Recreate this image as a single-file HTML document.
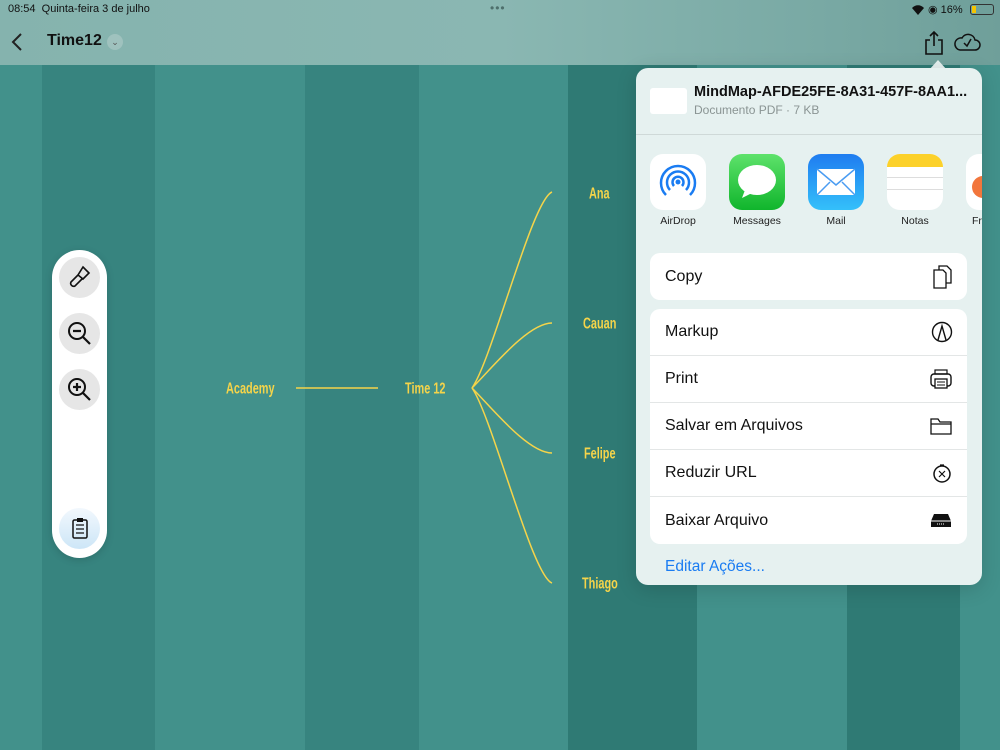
<!DOCTYPE html>
<html><head><meta charset="utf-8"><style>
*{margin:0;padding:0;box-sizing:border-box}
body{width:1000px;height:750px;overflow:hidden;position:relative;font-family:"Liberation Sans",sans-serif;background:#42918b}
.st{position:absolute;top:0;height:750px}
.top{position:absolute;left:0;top:0;width:1000px;height:65px;background:linear-gradient(90deg,#85b3ae 0%,#8ab7b2 50%,#7aaaa5 80%,#6f9f9a 100%)}
.lbl{position:absolute;color:#f5d44a;font-family:"Liberation Sans Narrow","Liberation Sans",sans-serif;font-weight:bold;font-size:14px;transform:scale(0.78,1.1);transform-origin:left center;white-space:nowrap}
.panel{position:absolute;left:636px;top:68px;width:346px;height:517px;background:#e6f1f0;border-radius:12px;box-shadow:0 4px 20px rgba(0,0,0,.15);overflow:hidden}
.grp{position:absolute;left:14px;width:317px;background:#fff;border-radius:10px}
.row{height:47px;border-bottom:1px solid #e3e6e6;display:flex;align-items:center;justify-content:space-between;padding:0 14px 0 15px;font-size:16px;color:#111}
.row:last-child{border-bottom:none}
.app{position:absolute;top:86px;width:56px;height:56px;border-radius:13px}
.an{position:absolute;top:147px;font-size:10.5px;color:#222;width:80px;text-align:center}
.tb{position:absolute;left:52px;top:250px;width:55px;height:308px;background:#fff;border-radius:28px;box-shadow:0 2px 8px rgba(0,0,0,.15)}
.tbb{position:absolute;left:7px;width:41px;height:41px;border-radius:50%;background:#e6e6e6}
</style></head><body>
<div class="st" style="left:42px;width:113px;background:#37847f"></div>
<div class="st" style="left:305px;width:114px;background:#37847f"></div>
<div class="st" style="left:568px;width:129px;background:#2f7a74"></div>
<div class="st" style="left:847px;width:113px;background:#2f7a74"></div>
<div class="top"></div>
<div style="position:absolute;left:8px;top:3px;font-size:11px;color:#111">08:54&nbsp;&nbsp;Quinta-feira 3 de julho</div>
<div style="position:absolute;left:490px;top:1px;font-size:12px;color:#4e6f6c;letter-spacing:1px">•••</div>
<svg style="position:absolute;left:911px;top:4px" width="14" height="11"><path d="M1 4 A8 8 0 0 1 13 4 L7 11Z" fill="#111"/></svg>
<div style="position:absolute;left:928px;top:3px;font-size:11px;color:#111">◉ 16%</div>
<div style="position:absolute;left:970px;top:4px;width:24px;height:11px;border:1px solid #333;border-radius:3px"><div style="width:4px;height:7px;margin:1px;background:#f5c400"></div></div>
<svg style="position:absolute;left:10px;top:32px" width="16" height="20"><path d="M11 2 L3 10 L11 18" stroke="#222" stroke-width="2" fill="none"/></svg>
<div style="position:absolute;left:47px;top:32px;font-size:16px;font-weight:bold;color:#111">Time12</div>
<div style="position:absolute;left:107px;top:34px;width:16px;height:16px;border-radius:50%;background:#9fc2be;font-size:9px;text-align:center;line-height:16px;color:#555">⌄</div>
<svg style="position:absolute;left:922px;top:30px" width="24" height="26"><path d="M8 10 H4 V24 H20 V10 H16 M12 2 V16 M8 6 L12 2 L16 6" stroke="#111" stroke-width="1.6" fill="none"/></svg>
<svg style="position:absolute;left:953px;top:32px" width="28" height="20"><path d="M7 18 H22 A5 5 0 0 0 22 8 A7 7 0 0 0 9 6 A6 6 0 0 0 7 18 Z" stroke="#111" stroke-width="1.5" fill="none"/><path d="M11 11 L14 14 L18 7" stroke="#111" stroke-width="1.5" fill="none"/></svg>

<svg style="position:absolute;left:0;top:0" width="640" height="750">
<g stroke="#f5d44a" stroke-width="1.5" fill="none">
<path d="M296 388 H378"/>
<path d="M472 388 C492 360, 532 200, 552 192"/>
<path d="M472 388 C492 368, 528 323, 552 323"/>
<path d="M472 388 C492 408, 528 453, 552 453"/>
<path d="M472 388 C492 416, 532 576, 552 583"/>
</g></svg>
<div class="lbl" style="left:226px;top:380px">Academy</div>
<div class="lbl" style="left:405px;top:380px">Time 12</div>
<div class="lbl" style="left:589px;top:185px">Ana</div>
<div class="lbl" style="left:583px;top:315px">Cauan</div>
<div class="lbl" style="left:584px;top:445px">Felipe</div>
<div class="lbl" style="left:582px;top:575px">Thiago</div>

<div class="tb">
<div class="tbb" style="top:7px"><svg width="41" height="41"><path d="M24 10 L30 16 L24 22 L19 18 Z M19 18 L12 25 A3 3 0 0 0 16 29 L23 22" stroke="#111" stroke-width="1.6" fill="none"/></svg></div>
<div class="tbb" style="top:63px"><svg width="41" height="41"><circle cx="18" cy="18" r="8" stroke="#111" stroke-width="2" fill="none"/><path d="M14 18 H22 M24 24 L31 31" stroke="#111" stroke-width="2.2"/></svg></div>
<div class="tbb" style="top:119px"><svg width="41" height="41"><circle cx="18" cy="18" r="8" stroke="#111" stroke-width="2" fill="none"/><path d="M14 18 H22 M18 14 V22 M24 24 L31 31" stroke="#111" stroke-width="2.2"/></svg></div>
<div class="tbb" style="top:258px;background:linear-gradient(#f2f8fd,#cde6f7)"><svg width="41" height="41"><rect x="14" y="12" width="14" height="18" rx="1.5" stroke="#111" stroke-width="1.5" fill="none"/><rect x="18" y="10" width="6" height="4" fill="#111"/><path d="M17 17H25M17 21H25M17 25H25" stroke="#111" stroke-width="1.3"/></svg></div>
</div>

<svg style="position:absolute;left:929px;top:60px" width="18" height="10"><path d="M0 10 L9 0 L18 10Z" fill="#e6f1f0"/></svg>
<div class="panel">
<div style="position:absolute;left:14px;top:20px;width:37px;height:26px;background:#fff;border-radius:3px"></div>
<div style="position:absolute;left:58px;top:16px;font-size:14.5px;font-weight:bold;color:#111">MindMap-AFDE25FE-8A31-457F-8AA1...</div>
<div style="position:absolute;left:58px;top:35px;font-size:12px;color:#8a9493">Documento PDF · 7 KB</div>
<div style="position:absolute;left:0;top:66px;width:346px;height:1px;background:#cfd9d8"></div>
<div class="app" style="left:14px;background:#fff"><svg width="56" height="56"><g stroke="#1a7cf2" stroke-width="2.5" fill="none"><path d="M20 36 A11 11 0 1 1 36 36"/><path d="M16 41 A17 17 0 1 1 40 41"/><path d="M24 32 A5.5 5.5 0 1 1 32 32"/></g><circle cx="28" cy="28" r="2.5" fill="#1a7cf2"/></svg></div>
<div class="app" style="left:93px;background:linear-gradient(#5ee26b,#10b52c)"><svg width="56" height="56"><ellipse cx="28" cy="26" rx="19" ry="15" fill="#fff"/><path d="M16 36 L13 44 L23 39Z" fill="#fff"/></svg></div>
<div class="app" style="left:172px;background:linear-gradient(#1f7cf0,#34c0fa)"><svg width="56" height="56"><rect x="9" y="15" width="38" height="26" fill="#fff"/><path d="M9 15 L28 31 L47 15 M9 41 L22 28 M47 41 L34 28" stroke="#4a9cf2" stroke-width="1.5" fill="none"/></svg></div>
<div class="app" style="left:251px;background:#fff;overflow:hidden"><div style="height:13px;background:#fcd12a"></div><div style="margin-top:10px;border-top:1px solid #ddd;height:12px"></div><div style="border-top:1px solid #ddd;height:12px"></div></div>
<div class="app" style="left:330px;width:30px;background:#fff;overflow:hidden"><div style="margin:22px 0 0 6px;width:22px;height:22px;border-radius:50%;background:#f2763c"></div></div>
<div class="an" style="left:2px">AirDrop</div>
<div class="an" style="left:81px">Messages</div>
<div class="an" style="left:160px">Mail</div>
<div class="an" style="left:239px">Notas</div>
<div class="an" style="left:316px;width:40px;text-align:left;padding-left:20px">Fr</div>
<div class="grp" style="top:185px"><div class="row">Copy<svg width="22" height="26"><path d="M3 6 H12 L15 9 V24 H3 Z M8 6 V2 H16 L20 6 V19 H15" stroke="#111" stroke-width="1.3" fill="none"/></svg></div></div>
<div class="grp" style="top:241px">
<div class="row">Markup<svg width="22" height="22"><circle cx="11" cy="11" r="9.5" stroke="#111" stroke-width="1.4" fill="none"/><path d="M7 19 L11 5 L15 19" stroke="#111" stroke-width="1.4" fill="none"/></svg></div>
<div class="row">Print<svg width="24" height="22"><rect x="2" y="6" width="20" height="12" rx="3" stroke="#111" stroke-width="1.4" fill="none"/><rect x="6" y="2" width="12" height="4" stroke="#111" stroke-width="1.2" fill="none"/><rect x="6" y="11" width="12" height="9" stroke="#111" stroke-width="1.3" fill="#fff"/><path d="M8 14H16M8 17H16" stroke="#111"/></svg></div>
<div class="row">Salvar em Arquivos<svg width="24" height="20"><path d="M2 3 H9 L11 6 H22 V18 H2 Z M2 8 H22" stroke="#111" stroke-width="1.3" fill="none"/></svg></div>
<div class="row">Reduzir URL<svg width="22" height="22"><circle cx="11" cy="12" r="8" stroke="#111" stroke-width="1.5" fill="none"/><path d="M9 3H13M8 9L14 15M14 9L8 15" stroke="#111" stroke-width="1.2"/></svg></div>
<div class="row">Baixar Arquivo<svg width="24" height="20"><path d="M5 3 H19 L22 10 V16 H2 V10 Z" fill="#111"/><path d="M2 10 H22" stroke="#fff"/><path d="M8 13H16" stroke="#fff" stroke-dasharray="1 1"/></svg></div>
</div>
<div style="position:absolute;left:29px;top:490px;font-size:15.5px;color:#1a7cf2">Editar Ações...</div>
</div>
</body></html>
